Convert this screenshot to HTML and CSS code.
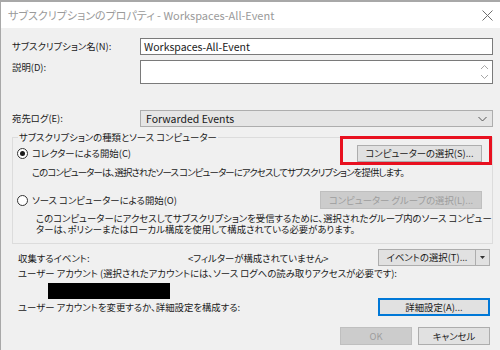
FILE: index.html
```html
<!DOCTYPE html>
<html lang="ja">
<head>
    <meta charset="UTF-8">
    <title>サブスクリプションのプロパティ</title>
    <link rel="stylesheet" href="styles.css">
</head>
<body>
    <div class="dialog">
        <div class="titlebar">
            <span class="title">サブスクリプションのプロパティ - Workspaces-All-Event</span>
            <svg class="close" width="11" height="11" viewBox="0 0 11 11">
                <path d="M0.5 0.5 L10.5 10.5 M10.5 0.5 L0.5 10.5" stroke="#6e6e6e" stroke-width="1" fill="none"/>
            </svg>
        </div>

        <div class="content">
            <div class="row name-row">
                <span class="label">サブスクリプション名(N):</span>
                <div class="textbox">Workspaces-All-Event</div>
            </div>
            <div class="row desc-row">
                <span class="label">説明(D):</span>
                <div class="textbox multi">
                    <svg class="spin" width="9" height="18" viewBox="0 0 9 18">
                        <path d="M1 6 L4.5 2.5 L8 6 M1 12 L4.5 15.5 L8 12" stroke="#a6a6a6" fill="none"/>
                    </svg>
                </div>
            </div>
            <div class="row log-row">
                <span class="label">宛先ログ(E):</span>
                <div class="select">
                    <span>Forwarded Events</span>
                    <svg width="9" height="6" viewBox="0 0 9 6">
                        <path d="M0.5 1 L4.5 5 L8.5 1" stroke="#555" fill="none"/>
                    </svg>
                </div>
            </div>

            <fieldset class="group">
                <legend>サブスクリプションの種類とソース コンピューター</legend>
                <div class="opt-row first">
                    <span class="radio checked"></span>
                    <span class="opt-label">コレクターによる開始(C)</span>
                    <span class="highlight">
                        <button class="btn">コンピューターの選択(S)...</button>
                    </span>
                </div>
                <p class="opt-desc tight">このコンピューターは、選択されたソース コンピューターにアクセスしてサブスクリプションを提供します。</p>
                <div class="opt-row second">
                    <span class="radio"></span>
                    <span class="opt-label">ソース コンピューターによる開始(O)</span>
                    <button class="btn wide" disabled>コンピューター グループの選択(L)...</button>
                </div>
                <p class="opt-desc indent">このコンピューターにアクセスしてサブスクリプションを受信するために、選択されたグループ内のソース コンピュー<br>ターは、ポリシーまたはローカル構成を使用して構成されている必要があります。</p>
            </fieldset>

            <div class="lower">
                <div class="events-row">
                    <span class="ev-label">収集するイベント:</span>
                    <span class="ev-filter">&lt;フィルターが構成されていません&gt;</span>
                    <div class="split">
                        <button class="btn split-main">イベントの選択(T)...</button>
                        <button class="btn split-arrow">
                            <svg width="5" height="3" viewBox="0 0 5 3"><path d="M0 0 H5 L2.5 3 Z" fill="#333"/></svg>
                        </button>
                    </div>
                </div>
                <p class="account">ユーザー アカウント (選択されたアカウントには、ソース ログへの読み取りアクセスが必要です):</p>
                <div class="redacted"></div>
                <div class="adv-row">
                    <span>ユーザー アカウントを変更するか、詳細設定を構成する:</span>
                    <button class="btn adv">詳細設定(A)...</button>
                </div>
                <div class="footer">
                    <button class="btn ok" disabled>OK</button>
                    <button class="btn cancel">キャンセル</button>
                </div>
            </div>
        </div>
    </div>
</body>
</html>
```

FILE: styles.css
```css
* {
    margin: 0;
    padding: 0;
    box-sizing: border-box;
}

body {
    width: 500px;
    height: 350px;
    overflow: hidden;
    background: #f0f0f0;
    font-family: "Noto Sans CJK JP", "Noto Sans", sans-serif;
    font-feature-settings: "palt";
    font-size: 9.4px;
    color: #1a1a1a;
}

.dialog {
    width: 500px;
    height: 350px;
    border-top: 2px solid #a8a8a8;
    border-left: 1px solid #a8a8a8;
    background: #f0f0f0;
}

.titlebar {
    height: 26px;
    background: #fff;
    display: flex;
    align-items: center;
    justify-content: space-between;
    padding: 0 7px 0 7px;
}

.title {
    font-size: 11px;
    color: #9a9a9a;
}

.content {
    padding: 10px 7px 0 11px;
}

.row {
    display: flex;
}

.label {
    width: 128px;
    flex-shrink: 0;
    line-height: 17px;
}

.textbox {
    flex: 1;
    height: 17px;
    background: #fff;
    border: 1px solid #7a7a7a;
    padding: 0 3px;
    line-height: 15px;
    font-size: 10.5px;
}

.desc-row {
    margin-top: 5px;
}

.desc-row .label {
    line-height: 14px;
}

.textbox.multi {
    height: 24px;
    display: flex;
    justify-content: flex-end;
    align-items: center;
    padding: 0 3px;
}

.log-row {
    margin-top: 26px;
}

.select {
    flex: 1;
    height: 17px;
    background: #e5e5e5;
    border: 1px solid #adadad;
    display: flex;
    align-items: center;
    justify-content: space-between;
    padding: 0 5px 0 5px;
    font-size: 10.5px;
}

.group {
    margin-top: 4px;
    border: 1px solid #dcdcdc;
    padding: 0 10px 8px 4px;
    height: 113px;
    min-width: 0;
}

.group legend {
    margin-left: 1px;
    padding: 0 1px;
    line-height: 12px;
}

.opt-row {
    display: flex;
    align-items: center;
    height: 18px;
}

.opt-row.first {
    margin-top: 1px;
}

.opt-row.second {
    margin-top: 13px;
}

.radio {
    width: 11px;
    height: 11px;
    border: 1px solid #333;
    border-radius: 50%;
    background: #fff;
    display: flex;
    align-items: center;
    justify-content: center;
    margin-right: 4px;
}

.radio.checked::after {
    content: "";
    width: 5px;
    height: 5px;
    border-radius: 50%;
    background: #1a1a1a;
}

.opt-label {
    flex: 1;
}

.highlight {
    position: relative;
    display: flex;
}

.highlight::before {
    content: "";
    position: absolute;
    left: -17px;
    top: -9px;
    right: -10px;
    bottom: -3px;
    border: 3px solid #e8101f;
    pointer-events: none;
}

.btn {
    font-family: inherit;
    font-feature-settings: "palt";
    font-size: 9.4px;
    color: #1a1a1a;
    background: #e1e1e1;
    border: 1px solid #adadad;
    height: 17px;
    padding: 0 4px;
    line-height: 15px;
    white-space: nowrap;
}

.opt-row .btn {
    width: 125px;
}

.opt-row .btn.wide {
    width: 162px;
    height: 18px;
}

.btn:disabled {
    background: #cccccc;
    border-color: #bfbfbf;
    color: #9d9d9d;
}

.opt-desc {
    margin-top: 5px;
    margin-left: 15px;
    line-height: 11px;
    white-space: nowrap;
}

.opt-desc.tight {
    letter-spacing: -0.85px;
}

.opt-desc.indent {
    margin-top: 4px;
    margin-left: 19px;
    line-height: 11px;
}

.lower {
    padding: 0 3px 0 6px;
}

.events-row {
    display: flex;
    align-items: center;
    margin-top: 5px;
    height: 17px;
}

.ev-label {
    width: 170px;
}

.ev-filter {
    flex: 1;
}

.split {
    display: flex;
}

.split-main {
    width: 97px;
    border-right: none;
}

.split-arrow {
    width: 15px;
    padding: 0;
    display: flex;
    align-items: center;
    justify-content: center;
}

.account {
    line-height: 12px;
    margin-top: 1px;
    white-space: nowrap;
}

.redacted {
    width: 122px;
    height: 16px;
    background: #000;
    margin-left: 30px;
    margin-top: 4px;
}

.adv-row {
    display: flex;
    align-items: center;
    justify-content: space-between;
    margin-top: -1px;
    height: 18px;
}

.btn.adv {
    width: 112px;
    height: 18px;
    border: 1px solid #0078d7;
    box-shadow: inset 0 0 0 1px #0078d7;
}

.footer {
    display: flex;
    justify-content: flex-end;
    gap: 6px;
    margin-top: 11px;
}

.footer .btn {
    width: 72px;
    height: 18px;
}
```
